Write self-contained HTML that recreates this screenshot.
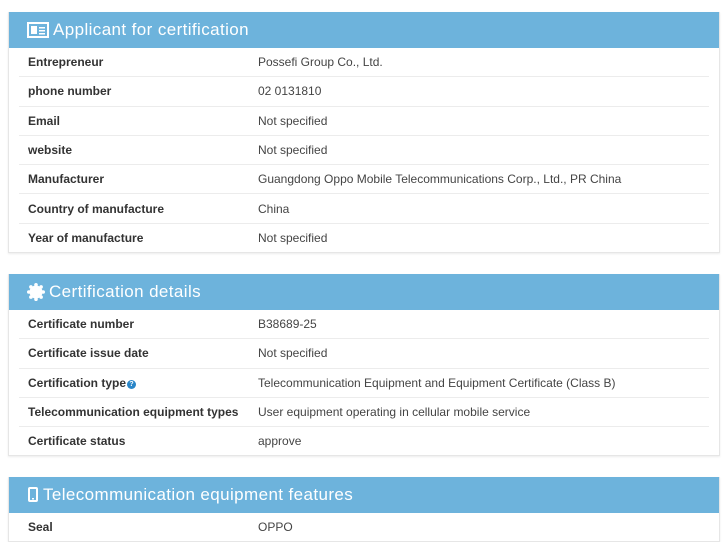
<!DOCTYPE html>
<html><head><style>
body{margin:0;background:#fff;font-family:"Liberation Sans",sans-serif;width:727px;height:532px;overflow:hidden;position:relative}
.p{position:absolute;left:8px;width:710px;background:#fff;border:1px solid #e6e6e6;border-top:none;box-shadow:0 1px 2px rgba(0,0,0,.08)}
.h{height:36px;background:#6db3dc;color:#fff;font-size:17px;line-height:36px;padding-left:18px;display:flex;align-items:center;gap:4px;letter-spacing:.4px}
.r{height:28.3px;margin:0 10px;border-bottom:1px solid #ececec;display:flex;align-items:center;font-size:12px;color:#333}
.r:last-child{border-bottom:none}
.l{width:230px;padding-left:9px;font-weight:bold;color:#333}
.v{color:#444}
.q{display:inline-block;width:9px;height:9px;border-radius:50%;background:#2a86c8;color:#fff;font-size:7px;line-height:9px;text-align:center;font-weight:bold;vertical-align:1px;margin-left:1px}
</style></head><body>
<div class="p" style="top:12px">
<div class="h"><svg width="22" height="16" viewBox="0 0 22 16"><rect x="1" y="1" width="20" height="14" fill="none" stroke="#fff" stroke-width="2"/><rect x="4" y="4" width="6" height="8" fill="#fff"/><rect x="12" y="5" width="6" height="1.5" fill="#fff"/><rect x="12" y="8" width="6" height="1.5" fill="#fff"/><rect x="12" y="11" width="6" height="1.5" fill="#fff"/></svg>Applicant for certification</div>
<div class="r"><div class="l">Entrepreneur</div><div class="v">Possefi Group Co., Ltd.</div></div>
<div class="r"><div class="l">phone number</div><div class="v">02 0131810</div></div>
<div class="r"><div class="l">Email</div><div class="v">Not specified</div></div>
<div class="r"><div class="l">website</div><div class="v">Not specified</div></div>
<div class="r"><div class="l">Manufacturer</div><div class="v">Guangdong Oppo Mobile Telecommunications Corp., Ltd., PR China</div></div>
<div class="r"><div class="l">Country of manufacture</div><div class="v">China</div></div>
<div class="r"><div class="l">Year of manufacture</div><div class="v">Not specified</div></div>
</div>
<div class="p" style="top:274px">
<div class="h"><svg width="18" height="18" viewBox="0 0 18 18"><circle cx="9" cy="9" r="6.5" fill="#fff"/><g fill="#fff"><circle cx="9" cy="1.8" r="1.8"/><circle cx="9" cy="16.2" r="1.8"/><circle cx="1.8" cy="9" r="1.8"/><circle cx="16.2" cy="9" r="1.8"/><circle cx="3.9" cy="3.9" r="1.8"/><circle cx="14.1" cy="14.1" r="1.8"/><circle cx="3.9" cy="14.1" r="1.8"/><circle cx="14.1" cy="3.9" r="1.8"/></g></svg>Certification details</div>
<div class="r"><div class="l">Certificate number</div><div class="v">B38689-25</div></div>
<div class="r"><div class="l">Certificate issue date</div><div class="v">Not specified</div></div>
<div class="r"><div class="l">Certification type<span class="q">?</span></div><div class="v">Telecommunication Equipment and Equipment Certificate (Class B)</div></div>
<div class="r"><div class="l">Telecommunication equipment types</div><div class="v">User equipment operating in cellular mobile service</div></div>
<div class="r"><div class="l">Certificate status</div><div class="v">approve</div></div>
</div>
<div class="p" style="top:477px">
<div class="h"><svg width="12" height="16" viewBox="0 0 12 16"><rect x="2" y="1" width="8" height="13" rx="1" fill="none" stroke="#fff" stroke-width="2"/><rect x="5" y="11" width="2" height="1.5" fill="#fff"/></svg>Telecommunication equipment features</div>
<div class="r"><div class="l">Seal</div><div class="v">OPPO</div></div>
</div>
</body></html>
